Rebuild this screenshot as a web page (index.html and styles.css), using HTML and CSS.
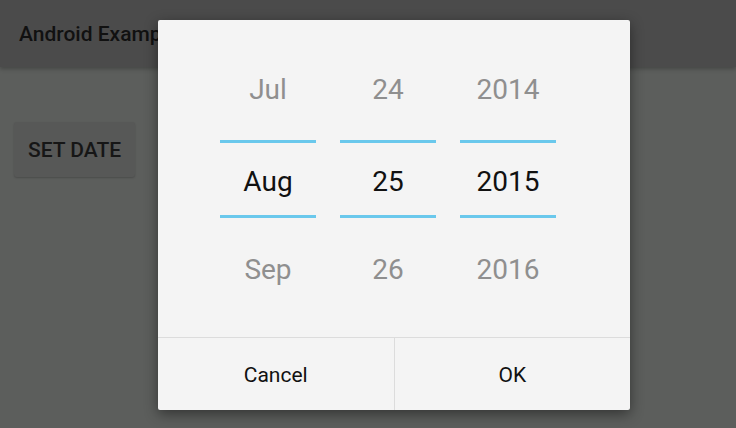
FILE: index.html
```html
<!DOCTYPE html>
<html lang="en">

<head>
  <meta charset="UTF-8">
  <meta name="viewport" content="width=device-width, initial-scale=1.0">
  <title>Android Example</title>
  <link rel="stylesheet" href="styles.css">
</head>

<body>

  <div class="app">
    <header class="app-bar">
      <h1>Android Example</h1>
    </header>
    <main class="content">
      <button class="set-date">SET DATE</button>
    </main>
  </div>

  <div class="dialog">
    <div class="picker">
      <div class="column">
        <div class="item">Jul</div>
        <div class="item selected">Aug</div>
        <div class="item">Sep</div>
      </div>
      <div class="column">
        <div class="item">24</div>
        <div class="item selected">25</div>
        <div class="item">26</div>
      </div>
      <div class="column">
        <div class="item">2014</div>
        <div class="item selected">2015</div>
        <div class="item">2016</div>
      </div>
    </div>
    <div class="actions">
      <button>Cancel</button>
      <button>OK</button>
    </div>
  </div>

</body>

</html>
```

FILE: styles.css
```css
* {
  box-sizing: border-box;
}

body {
  margin: 0;
  width: 736px;
  height: 428px;
  overflow: hidden;
  font-family: Roboto, "Liberation Sans", sans-serif;
  background-color: #5c5e5c;
  position: relative;
}

.app-bar {
  height: 67px;
  background-color: #4b4b4b;
  box-shadow: 0 2px 4px rgba(0, 0, 0, 0.25);
  display: flex;
  align-items: center;
  padding-left: 19px;
}

.app-bar h1 {
  margin: 0;
  font-size: 21px;
  font-weight: 500;
  color: #111;
}

.content {
  padding: 55px 14px;
}

.set-date {
  width: 121px;
  height: 55px;
  border: none;
  border-radius: 3px;
  background-color: #575857;
  box-shadow: 0 1px 2px rgba(0, 0, 0, 0.2);
  font-family: inherit;
  font-size: 21px;
  font-weight: 500;
  color: #161616;
}

/* dialog over the dimmed screen */
.dialog {
  position: absolute;
  left: 158px;
  top: 20px;
  width: 472px;
  height: 390px;
  background-color: #f4f4f4;
  border-radius: 2px;
  box-shadow: 0 4px 14px rgba(0, 0, 0, 0.45);
  display: flex;
  flex-direction: column;
}

.picker {
  display: flex;
  gap: 24px;
  padding: 25px 0 0 62px;
  height: 318px;
  border-bottom: 1px solid #dcdcdc;
}

.column {
  width: 96px;
  display: flex;
  flex-direction: column;
}

.item {
  height: 90px;
  line-height: 90px;
  text-align: center;
  font-size: 28px;
  color: #8f8f8f;
}

.item.selected {
  height: 78px;
  line-height: 74px;
  padding-top: 2px;
  margin: 5px 0 7px;
  border-top: 3px solid #6ac8ec;
  border-bottom: 3px solid #6ac8ec;
  color: #111;
}

.actions {
  flex: 1;
  display: flex;
}

.actions button {
  flex: 1;
  border: none;
  background: none;
  font-family: inherit;
  font-size: 21px;
  color: #111;
  padding-top: 2px;
}

.actions button + button {
  border-left: 1px solid #dcdcdc;
}
```
